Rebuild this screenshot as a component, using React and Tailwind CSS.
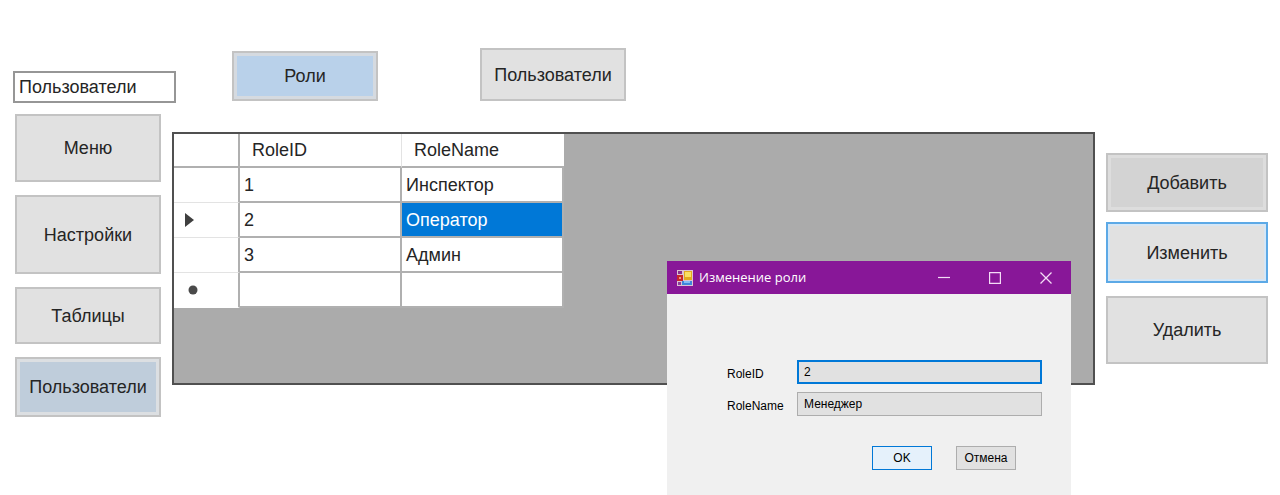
import { useState } from "react";
import { clsx } from "clsx";

const roles = [
  { id: "1", name: "Инспектор" },
  { id: "2", name: "Оператор" },
  { id: "3", name: "Админ" },
];

function FormButton({ className, children }) {
  return (
    <button
      type="button"
      className={clsx("flex shrink-0 items-center justify-center text-center leading-5", className)}
    >
      {children}
    </button>
  );
}

function FormIcon() {
  return (
    <svg viewBox="0 0 16 16" className="h-4 w-4 shrink-0" aria-hidden="true">
      <path d="M0 0h16v16H0z" fill="#dcc3d3" />
      <path d="M1 1h4v3H1z" fill="#8a2f8f" />
      <path d="M0 5h6v6H0z" fill="#c8252b" />
      <path d="M2 7h2v2H2z" fill="#ee9a80" />
      <path d="M1 12h3v3H1z" fill="#8a3f9c" />
      <path d="M7 1h8v9H7z" fill="#e3a91f" />
      <path d="M8 2h6v5H8z" fill="#f9df62" />
      <path d="M5 11h10v4H5z" fill="#3f86dc" />
      <path d="M7 11h6v2H7z" fill="#86bdf5" />
    </svg>
  );
}

function RolesTable() {
  const head = "h-[34px] border-b-2 border-[#b0b0b0] text-left font-normal";
  const cell = "h-[35px] border-r-2 border-b-2 border-[#b0b0b0] pl-1";
  const marker = "h-[35px] border-r-2 border-b border-r-[#b0b0b0] border-b-[#e3e3e3] pl-[11px]";
  return (
    <table className="w-[390px] table-fixed border-separate border-spacing-0 bg-white">
      <colgroup>
        <col className="w-[66px]" />
        <col className="w-[162px]" />
        <col className="w-[162px]" />
      </colgroup>
      <thead>
        <tr>
          <th className={clsx(head, "border-r-2")} aria-label="Строка" />
          <th className={clsx(head, "border-r border-r-[#e3e3e3] pl-3")}>RoleID</th>
          <th className={clsx(head, "pl-3")}>RoleName</th>
        </tr>
      </thead>
      <tbody>
        {roles.map((role) => (
          <tr key={role.id}>
            <td className={marker}>
              {role.id === "2" && (
                <svg viewBox="0 0 9 14" className="h-[14px] w-[9px]" aria-hidden="true">
                  <path d="M0 0L9 7L0 14Z" fill="#3f3f3f" />
                </svg>
              )}
            </td>
            <td className={cell}>{role.id}</td>
            <td className={clsx(cell, role.id === "2" && "bg-[#0078d7] text-white")}>{role.name}</td>
          </tr>
        ))}
        <tr>
          <td className={clsx(marker, "border-b-transparent")}>
            <svg viewBox="0 0 10 10" className="ml-[3px] h-[10px] w-[10px]" aria-hidden="true">
              <circle cx="5" cy="5" r="4.5" fill="#4a4a4a" />
            </svg>
          </td>
          <td className={cell} />
          <td className={cell} />
        </tr>
      </tbody>
    </table>
  );
}

function RoleDialog() {
  const [id, setId] = useState("2");
  const [name, setName] = useState("Менеджер");
  return (
    <section
      role="dialog"
      aria-labelledby="dialog-title"
      className="absolute top-[261px] right-[209px] w-[404px] bg-[#f0f0f0] text-xs text-black"
    >
      <header className="flex h-[33px] items-center bg-[#881798] pl-[10px] text-white">
        <FormIcon />
        <h2 id="dialog-title" className="ml-[6px] flex-1 font-['Open_Sans','Noto_Sans',sans-serif] text-[13px]">
          Изменение роли
        </h2>
        <button type="button" aria-label="Свернуть" className="flex h-full w-[51px] items-center justify-center">
          <svg viewBox="0 0 12 12" className="h-3 w-3" stroke="#f3dcf6" strokeWidth="1.2">
            <path d="M0 5.5H12" />
          </svg>
        </button>
        <button type="button" aria-label="Развернуть" className="flex h-full w-[51px] items-center justify-center">
          <svg viewBox="0 0 12 12" className="h-3 w-3" fill="none" stroke="#f3dcf6" strokeWidth="1.2">
            <path d="M.6 .6H11.4V11.4H.6Z" />
          </svg>
        </button>
        <button type="button" aria-label="Закрыть" className="flex h-full w-[51px] items-center justify-center">
          <svg viewBox="0 0 12 12" className="h-3 w-3" stroke="#f3dcf6" strokeWidth="1.3">
            <path d="M.5 .5L11.5 11.5M11.5 .5L.5 11.5" />
          </svg>
        </button>
      </header>
      <form className="pt-[66px] pr-[29px] pb-[25px] pl-[60px]">
        <div className="grid grid-cols-[70px_1fr] items-center gap-y-2">
          <label htmlFor="role-id" className="pt-1">RoleID</label>
          <input
            id="role-id"
            value={id}
            onChange={(e) => setId(e.target.value)}
            className="h-6 w-full min-w-0 border-2 border-[#0078d7] bg-[#e1e1e1] px-[5px] outline-none"
          />
          <label htmlFor="role-name" className="pt-1">RoleName</label>
          <input
            id="role-name"
            value={name}
            onChange={(e) => setName(e.target.value)}
            className="h-6 w-full min-w-0 border border-[#adadad] bg-[#e1e1e1] px-[6px] outline-none"
          />
        </div>
        <div className="mt-[30px] flex justify-end gap-6 pr-[26px]">
          <FormButton className="h-6 w-[60px] border border-[#0078d7] bg-[#e5f1fb]">OK</FormButton>
          <FormButton className="h-6 w-[60px] border border-[#adadad] bg-[#e1e1e1]">Отмена</FormButton>
        </div>
      </form>
    </section>
  );
}

export default function App() {
  const [section, setSection] = useState("Пользователи");
  return (
    <div className="relative min-h-screen overflow-hidden bg-white font-['Liberation_Sans',Arial,sans-serif] text-lg leading-5 text-[#252525]">
      <main className="flex items-start pr-3 pl-[13px]">
        <aside className="flex w-[159px] shrink-0 flex-col pt-[71px]">
          <input
            aria-label="Раздел"
            value={section}
            onChange={(e) => setSection(e.target.value)}
            className="h-8 w-[163px] border-2 border-[#969696] bg-white px-1 outline-none"
          />
          <nav className="mt-[11px] ml-[2px] flex w-[146px] flex-col gap-[13px]">
            <FormButton className="h-[68px] border-2 border-[#c3c3c3] bg-[#e1e1e1]">Меню</FormButton>
            <FormButton className="h-[79px] border-2 border-[#c3c3c3] bg-[#e1e1e1]">Настройки</FormButton>
            <FormButton className="h-[57px] border-2 border-[#c3c3c3] bg-[#e1e1e1]">Таблицы</FormButton>
            <FormButton className="h-[60px] border-2 border-[#c3c3c3] bg-[#bfcddb] ring-3 ring-[#dcdfe2] ring-inset">
              Пользователи
            </FormButton>
          </nav>
        </aside>

        <div className="min-w-0 flex-1 pt-12">
          <nav className="flex items-end gap-[102px] pl-[60px]">
            <FormButton className="h-[50px] w-[146px] border-2 border-[#c3c3c3] bg-[#b9d1ea] ring-3 ring-[#d5dae0] ring-inset">
              Роли
            </FormButton>
            <FormButton className="h-[53px] w-[146px] border-2 border-[#c3c3c3] bg-[#e1e1e1]">
              Пользователи
            </FormButton>
          </nav>
          <div className="mt-[31px] min-h-[253px] border-2 border-[#505050] bg-[#ababab]">
            <RolesTable />
          </div>
        </div>

        <aside className="ml-[11px] flex w-[162px] shrink-0 flex-col pt-[153px]">
          <FormButton className="h-[59px] border-2 border-[#c3c3c3] bg-[#d3d3d3] ring-3 ring-[#dddddd] ring-inset">
            Добавить
          </FormButton>
          <FormButton className="mt-[10px] h-[61px] border-2 border-[#5ca9e6] bg-[#e1e1e1] ring-2 ring-[#d5e6f5] ring-inset">
            Изменить
          </FormButton>
          <FormButton className="mt-[13px] h-[68px] border-2 border-[#c3c3c3] bg-[#e1e1e1]">Удалить</FormButton>
        </aside>
      </main>
      <RoleDialog />
    </div>
  );
}
